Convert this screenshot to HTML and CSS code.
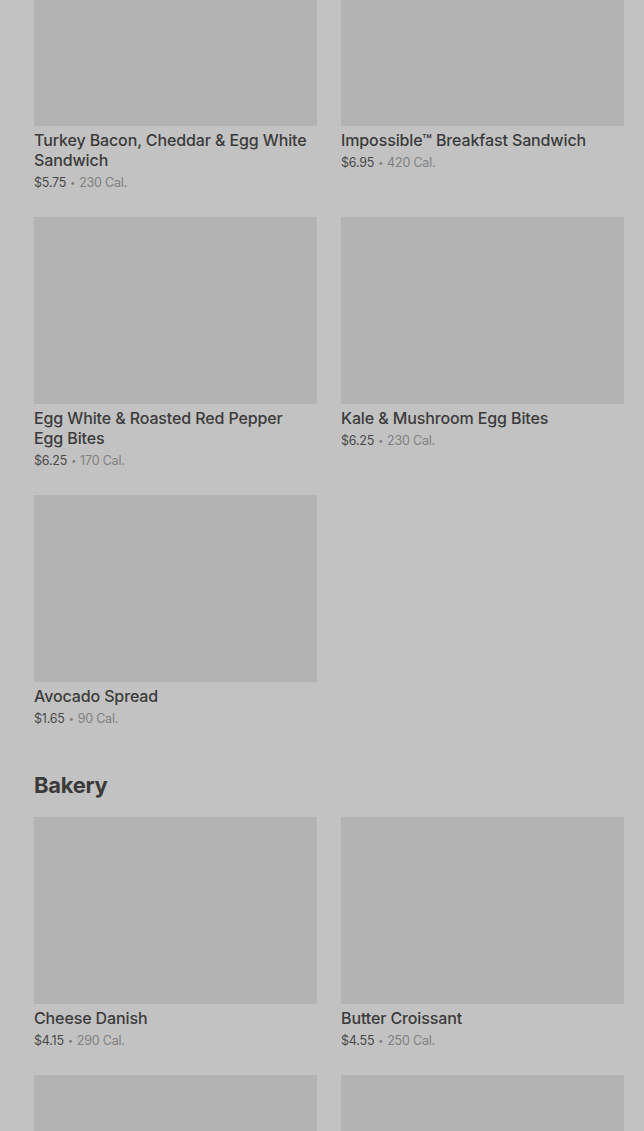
FILE: index.html
```html
<!DOCTYPE html>
<html>
<head>
<meta charset="utf-8">
<link rel="stylesheet" href="styles.css">
</head>
<body>
<main class="menu">
  <section class="section">
    <div class="grid">
      <div class="card"><div class="thumb"></div><div class="name">Turkey Bacon, Cheddar &amp; Egg White Sandwich</div><div class="meta"><span class="price">$5.75</span><span class="dot">•</span><span class="cal">230 Cal.</span></div></div>
      <div class="card"><div class="thumb"></div><div class="name">Impossible™ Breakfast Sandwich</div><div class="meta"><span class="price">$6.95</span><span class="dot">•</span><span class="cal">420 Cal.</span></div></div>
      <div class="card"><div class="thumb"></div><div class="name">Egg White &amp; Roasted Red Pepper Egg Bites</div><div class="meta"><span class="price">$6.25</span><span class="dot">•</span><span class="cal">170 Cal.</span></div></div>
      <div class="card"><div class="thumb"></div><div class="name">Kale &amp; Mushroom Egg Bites</div><div class="meta"><span class="price">$6.25</span><span class="dot">•</span><span class="cal">230 Cal.</span></div></div>
      <div class="card"><div class="thumb"></div><div class="name">Avocado Spread</div><div class="meta"><span class="price">$1.65</span><span class="dot">•</span><span class="cal">90 Cal.</span></div></div>
    </div>
  </section>
  <section class="section bakery">
    <h2 class="heading">Bakery</h2>
    <div class="grid">
      <div class="card"><div class="thumb"></div><div class="name">Cheese Danish</div><div class="meta"><span class="price">$4.15</span><span class="dot">•</span><span class="cal">290 Cal.</span></div></div>
      <div class="card"><div class="thumb"></div><div class="name">Butter Croissant</div><div class="meta"><span class="price">$4.55</span><span class="dot">•</span><span class="cal">250 Cal.</span></div></div>
      <div class="card"><div class="thumb"></div><div class="name">&nbsp;</div><div class="meta">&nbsp;</div></div>
      <div class="card"><div class="thumb"></div><div class="name">&nbsp;</div><div class="meta">&nbsp;</div></div>
    </div>
  </section>
</main>
</body>
</html>
```
FILE: styles.css
```css
html, body {
  margin: 0;
  padding: 0;
  background: #c2c2c2;
  overflow: hidden;
}
body {
  font-family: Inter, "Noto Sans", sans-serif;
  color: #3b3b3b;
}
.menu {
  margin-top: -61px;
  padding: 0 20px 0 34px;
}
.grid {
  display: grid;
  grid-template-columns: 283px 283px;
  column-gap: 24px;
  row-gap: 26px;
}
.thumb {
  height: 187px;
  background: #b3b3b3;
}
.name {
  margin-top: 4px;
  padding-right: 5px;
  font-size: 16px;
  line-height: 20px;
  font-weight: 500;
  color: #3b3b3b;
  letter-spacing: -0.12px;
}
.meta {
  margin-top: 4px;
  font-size: 12.5px;
  line-height: 17px;
  color: #7e7e7e;
  letter-spacing: -0.2px;
}
.price {
  color: #4a4a4a;
}
.dot {
  font-size: 9px;
  margin: 0 4px;
  color: #7e7e7e;
  vertical-align: 1px;
}
.cal {
  color: #808080;
}
.bakery {
  margin-top: 44px;
}
.heading {
  margin: 0 0 18px 0;
  font-size: 22px;
  line-height: 28px;
  font-weight: 700;
  color: #3a3a3a;
  letter-spacing: -0.3px;
}
```
